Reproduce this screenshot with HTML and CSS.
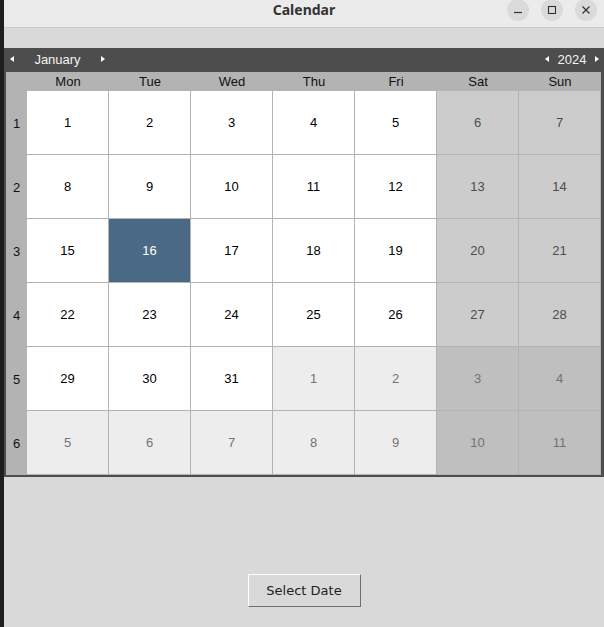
FILE: index.html
```html
<!DOCTYPE html>
<html lang="en">
<head>
  <meta charset="UTF-8" />
  <title>Calendar</title>
  <link rel="stylesheet" href="styles.css">
</head>
<body>
  <div class="edge"></div>
  <div class="window">
    <div class="titlebar">
      <div></div>
      <div class="title">Calendar</div>
      <div class="controls">
        <span class="ctl"><svg width="10" height="10" viewBox="0 0 10 10"><path d="M1 7.5h8" stroke="#333" stroke-width="1.2"/></svg></span>
        <span class="ctl"><svg width="10" height="10" viewBox="0 0 10 10"><rect x="1.5" y="1.5" width="7" height="7" fill="none" stroke="#333" stroke-width="1.1"/></svg></span>
        <span class="ctl"><svg width="10" height="10" viewBox="0 0 10 10"><path d="M1.5 1.5l7 7M8.5 1.5l-7 7" stroke="#333" stroke-width="1.2"/></svg></span>
      </div>
    </div>

    <div class="cal">
      <div class="cal-head">
        <div class="nav">
          <span class="arrow left"></span>
          <span class="label month">January</span>
          <span class="arrow right"></span>
        </div>
        <div class="nav">
          <span class="arrow left"></span>
          <span class="label year">2024</span>
          <span class="arrow right"></span>
        </div>
      </div>
      <div class="grid">
        <div class="hd"></div>
        <div class="hd">Mon</div><div class="hd">Tue</div><div class="hd">Wed</div><div class="hd">Thu</div><div class="hd">Fri</div><div class="hd">Sat</div><div class="hd">Sun</div>

        <div class="wk">1</div>
        <div class="day">1</div><div class="day">2</div><div class="day">3</div><div class="day">4</div><div class="day">5</div><div class="day we">6</div><div class="day we">7</div>

        <div class="wk">2</div>
        <div class="day">8</div><div class="day">9</div><div class="day">10</div><div class="day">11</div><div class="day">12</div><div class="day we">13</div><div class="day we">14</div>

        <div class="wk">3</div>
        <div class="day">15</div><div class="day sel">16</div><div class="day">17</div><div class="day">18</div><div class="day">19</div><div class="day we">20</div><div class="day we">21</div>

        <div class="wk">4</div>
        <div class="day">22</div><div class="day">23</div><div class="day">24</div><div class="day">25</div><div class="day">26</div><div class="day we">27</div><div class="day we">28</div>

        <div class="wk">5</div>
        <div class="day">29</div><div class="day">30</div><div class="day">31</div><div class="day other">1</div><div class="day other">2</div><div class="day other-we">3</div><div class="day other-we">4</div>

        <div class="wk">6</div>
        <div class="day other">5</div><div class="day other">6</div><div class="day other">7</div><div class="day other">8</div><div class="day other">9</div><div class="day other-we">10</div><div class="day other-we">11</div>
      </div>
    </div>

    <div class="actions">
      <button class="select-btn">Select Date</button>
    </div>
  </div>
</body>
</html>
```

FILE: styles.css
```css
* {
  box-sizing: border-box;
}
body {
  margin: 0;
  height: 627px;
  overflow: hidden;
  display: flex;
  background-color: #d9d9d9;
  font-family: 'Liberation Sans', Arial, sans-serif;
  font-size: 13px;
}
.edge {
  width: 4px;
  background-color: #1e1e1e;
}
.window {
  flex: 1;
  display: flex;
  flex-direction: column;
}
.titlebar {
  height: 28px;
  background-color: #ebebeb;
  border-bottom: 1px solid #c9c9c9;
  display: grid;
  grid-template-columns: 1fr auto 1fr;
  align-items: start;
}
.title {
  font-family: 'Noto Sans', sans-serif;
  font-weight: bold;
  font-size: 14px;
  line-height: 20px;
  color: #333;
}
.controls {
  justify-self: end;
  display: flex;
  gap: 12px;
  padding-right: 7px;
  margin-top: -1px;
}
.ctl {
  width: 22px;
  height: 22px;
  border-radius: 50%;
  background-color: #dadada;
  display: flex;
  align-items: center;
  justify-content: center;
}
.ctl svg {
  display: block;
}
.cal {
  margin-top: 20px;
  border: 2px solid #4d4d4d;
  border-right-width: 3px;
  background-color: #4d4d4d;
}
.cal-head {
  height: 22px;
  padding-bottom: 4px;
  display: flex;
  justify-content: space-between;
  align-items: center;
  color: #f2f2f2;
}
.nav {
  display: flex;
  align-items: center;
}
.nav:first-child {
  padding-left: 4px;
}
.nav:last-child {
  padding-right: 2px;
}
.label {
  text-align: center;
}
.month {
  width: 87px;
}
.year {
  width: 46px;
}
.arrow {
  width: 0;
  height: 0;
  border-top: 3px solid transparent;
  border-bottom: 3px solid transparent;
}
.arrow.left {
  border-right: 4px solid #fff;
}
.arrow.right {
  border-left: 4px solid #fff;
}
.grid {
  display: grid;
  grid-template-columns: 21px repeat(7, 82px);
  grid-template-rows: 19px repeat(6, 64px);
  background-color: #b3b3b3;
}
.hd, .wk {
  display: flex;
  align-items: center;
  justify-content: center;
  color: #111;
}
.day {
  display: flex;
  align-items: center;
  justify-content: center;
  padding-bottom: 1px;
  background-color: #fff;
  color: #000;
  border-right: 1px solid #b3b3b3;
  border-bottom: 1px solid #b3b3b3;
}
.day.we {
  background-color: #cccccc;
  color: #4d4d4d;
}
.day.other {
  background-color: #ededed;
  color: #737373;
}
.day.other-we {
  background-color: #bfbfbf;
  color: #737373;
}
.day.sel {
  background-color: #4a6984;
  color: #fff;
}
.actions {
  display: flex;
  justify-content: center;
  padding-top: 97px;
}
.select-btn {
  width: 113px;
  height: 33px;
  padding: 0;
  background-color: #d9d9d9;
  border: 1px solid;
  border-color: #fff #707070 #707070 #fff;
  font-family: 'DejaVu Sans', sans-serif;
  font-size: 13px;
  color: #1e1e1e;
}
```
